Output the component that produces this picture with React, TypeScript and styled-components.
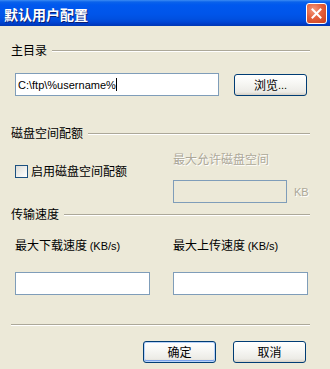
import React from "react";
import styled, { createGlobalStyle, css } from "styled-components";

const Global = createGlobalStyle`
  html, body { margin: 0; padding: 0; background: #ECE9D8; }
  body { font-family: "Noto Sans CJK SC", "Liberation Sans", sans-serif; font-size: 12px; color: #000; }
`;

const Window = styled.div`
  width: 330px;
  height: 369px;
  background: #ECE9D8;
  display: flex;
  flex-direction: column;
  overflow: hidden;
`;

const TitleBar = styled.div`
  height: 26px;
  flex: none;
  display: flex;
  align-items: center;
  justify-content: space-between;
  padding: 0 3px 0 4px;
  background: linear-gradient(
    to bottom,
    #3C8CF3 0px,
    #0A62EB 2px,
    #0058EE 5px,
    #0055EA 14px,
    #0050E0 19px,
    #0046D5 22px,
    #0038BE 25px,
    #003BB0 26px
  );
`;

const Title = styled.span`
  font-family: "Noto Sans CJK SC", sans-serif;
  font-weight: 700;
  font-size: 14px;
  line-height: 16px;
  color: #fff;
  text-shadow: 1px 1px 0 #0A1F73;
  margin-top: 1px;
`;

const CloseButton = styled.div`
  width: 19px;
  height: 19px;
  border: 1px solid #fff;
  border-radius: 3px;
  background: radial-gradient(circle at 35% 30%, #F39A7E 0%, #E4603C 45%, #C9401E 100%);
  display: flex;
  align-items: center;
  justify-content: center;
  margin-top: 1px;
`;

const Body = styled.div`
  flex: 1;
  padding: 17px 20px 0 11px;
  display: flex;
  flex-direction: column;
`;

const SectionHeader = styled.div<{ $mt?: number }>`
  display: flex;
  align-items: center;
  height: 14px;
  margin-top: ${(p) => p.$mt ?? 0}px;
`;

const SectionLabel = styled.span`
  line-height: 14px;
  white-space: nowrap;
`;

const Rule = styled.div`
  flex: 1;
  height: 0;
  border-top: 1px solid #ACA899;
  border-bottom: 1px solid #fff;
`;

const HeaderRule = styled(Rule)`
  margin-left: 5px;
  margin-top: 1px;
`;

const Row = styled.div<{ $mt?: number; $indent?: number }>`
  display: flex;
  align-items: center;
  margin-top: ${(p) => p.$mt ?? 0}px;
  padding-left: ${(p) => p.$indent ?? 4}px;
`;

const Field = styled.div<{ $w: number; $disabled?: boolean }>`
  width: ${(p) => p.$w}px;
  height: 23px;
  box-sizing: border-box;
  border: 1px solid #7F9DB9;
  background: ${(p) => (p.$disabled ? "#ECE9D8" : "#fff")};
  display: flex;
  align-items: center;
  padding-left: 2px;
  font-family: "Liberation Sans", "DejaVu Sans", sans-serif;
  font-size: 11px;
  flex: none;
`;

const Caret = styled.span`
  display: inline-block;
  width: 1px;
  height: 13px;
  background: #000;
`;

const Button = styled.div<{ $default?: boolean; $ml?: number }>`
  width: 73px;
  height: 22px;
  box-sizing: border-box;
  margin-left: ${(p) => p.$ml ?? 0}px;
  border: 1px solid #003C74;
  border-radius: 3px;
  background: linear-gradient(to bottom, #FFFFFF 0%, #F7F7F4 40%, #ECEBE6 85%, #D6D0C5 100%);
  display: flex;
  align-items: center;
  justify-content: center;
  font-size: 12px;
  line-height: 14px;
  flex: none;
  ${(p) =>
    p.$default &&
    css`
      box-shadow: inset 0 0 0 1px #B8D2F8, inset 0 -1px 0 1px #7AA2EB;
    `}
`;

const QuotaGrid = styled.div`
  display: grid;
  grid-template-columns: 158px 1fr;
  margin-top: 13px;
  padding-left: 4px;
`;

const Check = styled.div`
  width: 13px;
  height: 13px;
  box-sizing: border-box;
  border: 1px solid #1C5180;
  background: linear-gradient(135deg, #DCDCD7 0%, #F2F2EF 60%, #FFFFFF 100%);
  flex: none;
`;

const CheckLabel = styled.label`
  display: flex;
  align-items: center;
  gap: 3px;
  margin-top: 11px;
  line-height: 14px;
  align-self: start;
`;

const Muted = styled.span`
  color: #ACA899;
  text-shadow: 1px 1px 0 #fff;
  line-height: 12px;
`;

const Unit = styled.span`
  color: #ACA899;
  text-shadow: 1px 1px 0 #fff;
  font-family: "Liberation Sans", "DejaVu Sans", sans-serif;
  font-size: 11px;
  margin-left: 7px;
`;

const DisabledColumn = styled.div`
  display: flex;
  flex-direction: column;
  gap: 15px;
`;

const SpeedGrid = styled.div`
  display: grid;
  grid-template-columns: 158px 134px;
  row-gap: 19px;
  margin-top: 17px;
  padding-left: 4px;
`;

const SpeedLabel = styled.span`
  line-height: 14px;
  white-space: nowrap;
`;

const Latin = styled.span`
  font-family: "Liberation Sans", sans-serif;
  font-size: 11px;
`;

const ButtonRow = styled.div`
  display: flex;
  justify-content: flex-end;
  gap: 17px;
  margin-top: 15px;
  padding-right: 4px;
`;

export default function App() {
  return (
    <>
      <Global />
      <Window>
        <TitleBar>
          <Title>默认用户配置</Title>
          <CloseButton>
            <svg width="11" height="11" viewBox="0 0 11 11">
              <path d="M1.5 1.5 L9.5 9.5 M9.5 1.5 L1.5 9.5" stroke="#fff" strokeWidth="2" strokeLinecap="square" />
            </svg>
          </CloseButton>
        </TitleBar>
        <Body>
          <SectionHeader>
            <SectionLabel>主目录</SectionLabel>
            <HeaderRule />
          </SectionHeader>
          <Row $mt={16}>
            <Field $w={204}>
              C:\ftp\%username%
              <Caret />
            </Field>
            <Button $ml={15}>
              浏览<Latin>...</Latin>
            </Button>
          </Row>
          <SectionHeader $mt={30}>
            <SectionLabel>磁盘空间配额</SectionLabel>
            <HeaderRule />
          </SectionHeader>
          <QuotaGrid>
            <CheckLabel>
              <Check />
              启用磁盘空间配额
            </CheckLabel>
            <DisabledColumn>
              <Muted>最大允许磁盘空间</Muted>
              <Row $indent={0}>
                <Field $w={114} $disabled />
                <Unit>KB</Unit>
              </Row>
            </DisabledColumn>
          </QuotaGrid>
          <SectionHeader $mt={4}>
            <SectionLabel>传输速度</SectionLabel>
            <HeaderRule />
          </SectionHeader>
          <SpeedGrid>
            <SpeedLabel>
              最大下载速度 <Latin>(KB/s)</Latin>
            </SpeedLabel>
            <SpeedLabel>
              最大上传速度 <Latin>(KB/s)</Latin>
            </SpeedLabel>
            <Field $w={135} />
            <Field $w={135} />
          </SpeedGrid>
          <Row $mt={29} $indent={0}>
            <Rule />
          </Row>
          <ButtonRow>
            <Button $default>确定</Button>
            <Button>取消</Button>
          </ButtonRow>
        </Body>
      </Window>
    </>
  );
}
